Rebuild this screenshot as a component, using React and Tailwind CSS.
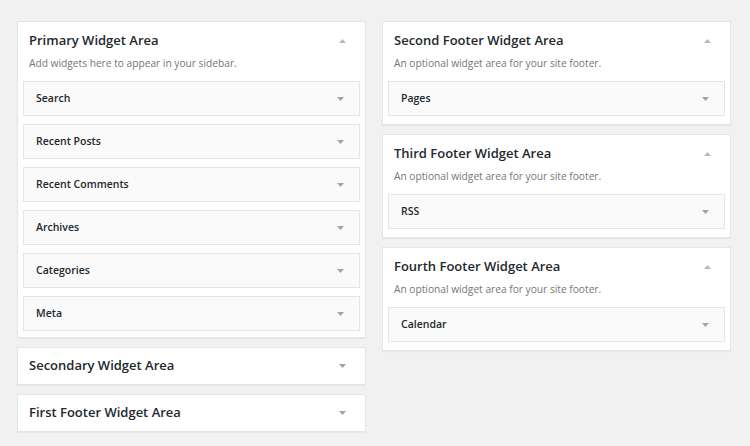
const font = { fontFamily: '"Open Sans", "Liberation Sans", sans-serif' };

function Arrow({ up }) {
  return (
    <svg width="7" height="4" viewBox="0 0 7 4" className="shrink-0">
      {up ? (
        <path d="M0 4 L3.5 0 L7 4 Z" fill="#b4b9be" />
      ) : (
        <path d="M0 0 L7 0 L3.5 4 Z" fill="#a0a5aa" />
      )}
    </svg>
  );
}

function WidgetRow({ name }) {
  return (
    <div className="flex h-[35px] items-center justify-between border border-[#e5e5e5] bg-[#fafafa] pl-[12px] pr-[15px]">
      <span className="text-[10.5px] font-semibold text-[#23282d]">{name}</span>
      <Arrow />
    </div>
  );
}

function Area({ title, desc, widgets, last = "pb-[8px]" }) {
  return (
    <div className="border border-[#e5e5e5] bg-white shadow-[0_1px_1px_rgba(0,0,0,0.04)]">
      <div className="flex h-[37px] items-center justify-between pl-[11px] pr-[19px]">
        <h2 className="text-[13px] font-semibold text-[#23282d]">{title}</h2>
        <Arrow up />
      </div>
      <p className="-mt-[3px] h-[14px] pl-[11px] text-[10.2px] leading-[14px] text-[#72777c]">{desc}</p>
      <div className={`mt-[11px] space-y-[8px] px-[5px] ${last}`}>
        {widgets.map((w) => (
          <WidgetRow key={w} name={w} />
        ))}
      </div>
    </div>
  );
}

function Closed({ title }) {
  return (
    <div className="flex h-[38px] items-center justify-between border border-[#e5e5e5] bg-white pl-[11px] pr-[19px] shadow-[0_1px_1px_rgba(0,0,0,0.04)]">
      <h2 className="text-[13px] font-semibold text-[#23282d]">{title}</h2>
      <Arrow />
    </div>
  );
}

export default function App() {
  const footerDesc = "An optional widget area for your site footer.";
  return (
    <div className="min-h-[446px] w-[750px] bg-[#f1f1f1] pl-[17px] pt-[21px]" style={font}>
      <div className="flex gap-[16px]">
        <div className="w-[349px] space-y-[9px]">
          <Area
            title="Primary Widget Area"
            desc="Add widgets here to appear in your sidebar."
            widgets={["Search", "Recent Posts", "Recent Comments", "Archives", "Categories", "Meta"]}
            last="pb-[6px]"
          />
          <Closed title="Secondary Widget Area" />
          <Closed title="First Footer Widget Area" />
        </div>
        <div className="w-[349px] space-y-[9px]">
          <Area title="Second Footer Widget Area" desc={footerDesc} widgets={["Pages"]} />
          <Area title="Third Footer Widget Area" desc={footerDesc} widgets={["RSS"]} />
          <Area title="Fourth Footer Widget Area" desc={footerDesc} widgets={["Calendar"]} />
        </div>
      </div>
    </div>
  );
}
